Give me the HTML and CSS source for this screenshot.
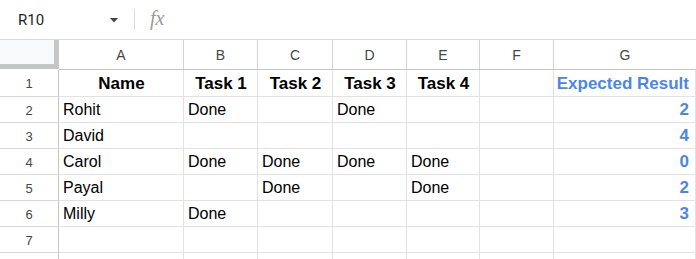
FILE: index.html
```html
<!DOCTYPE html>
<html>
<head>
<meta charset="utf-8">
<link rel="stylesheet" href="styles.css">
</head>
<body>
<div class="app">
  <div class="formula-bar">
    <div class="name-box">
      <span class="name-text">R10</span>
      <svg class="caret" width="8" height="5" viewBox="0 0 8 5"><path d="M0 0 L8 0 L4 4.5 Z" fill="#444"/></svg>
    </div>
    <div class="sep"></div>
    <span class="fx">fx</span>
  </div>
  <div class="sheet">
    <div class="corner"></div>
    <div class="colhead">A</div><div class="colhead">B</div><div class="colhead">C</div><div class="colhead">D</div><div class="colhead">E</div><div class="colhead">F</div><div class="colhead last">G</div>

    <div class="rowhead">1</div>
    <div class="cell b c">Name</div><div class="cell b c">Task 1</div><div class="cell b c">Task 2</div><div class="cell b c">Task 3</div><div class="cell b c">Task 4</div><div class="cell"></div><div class="cell b r blue">Expected Result</div>

    <div class="rowhead">2</div>
    <div class="cell">Rohit</div><div class="cell">Done</div><div class="cell"></div><div class="cell">Done</div><div class="cell"></div><div class="cell"></div><div class="cell b r blue">2</div>

    <div class="rowhead">3</div>
    <div class="cell">David</div><div class="cell"></div><div class="cell"></div><div class="cell"></div><div class="cell"></div><div class="cell"></div><div class="cell b r blue">4</div>

    <div class="rowhead">4</div>
    <div class="cell">Carol</div><div class="cell">Done</div><div class="cell">Done</div><div class="cell">Done</div><div class="cell">Done</div><div class="cell"></div><div class="cell b r blue">0</div>

    <div class="rowhead">5</div>
    <div class="cell">Payal</div><div class="cell"></div><div class="cell">Done</div><div class="cell"></div><div class="cell">Done</div><div class="cell"></div><div class="cell b r blue">2</div>

    <div class="rowhead">6</div>
    <div class="cell">Milly</div><div class="cell">Done</div><div class="cell"></div><div class="cell"></div><div class="cell"></div><div class="cell"></div><div class="cell b r blue">3</div>

    <div class="rowhead">7</div>
    <div class="cell"></div><div class="cell"></div><div class="cell"></div><div class="cell"></div><div class="cell"></div><div class="cell"></div><div class="cell"></div>

    <div class="rowhead"></div>
    <div class="cell"></div><div class="cell"></div><div class="cell"></div><div class="cell"></div><div class="cell"></div><div class="cell"></div><div class="cell"></div>
  </div>
</div>
</body>
</html>
```

FILE: styles.css
```css
html, body {
  margin: 0;
  padding: 0;
  background: #ffffff;
  overflow: hidden;
}
.app {
  width: 696px;
  height: 259px;
  overflow: hidden;
  font-family: "Liberation Sans", Arial, sans-serif;
}
.formula-bar {
  height: 39px;
  border-bottom: 1px solid #dadada;
  display: flex;
  align-items: center;
  background: #ffffff;
}
.name-box {
  width: 134px;
  display: flex;
  align-items: center;
  padding-left: 18px;
  box-sizing: border-box;
}
.name-text {
  font-family: Roboto, "Liberation Sans", sans-serif;
  font-size: 15px;
  color: #1f1f1f;
  flex: 1;
}
.caret {
  margin-right: 16px;
  margin-top: 1px;
}
.sep {
  width: 1px;
  height: 21px;
  background: #dcdcdc;
}
.fx {
  font-family: "Liberation Serif", "Times New Roman", serif;
  font-style: italic;
  font-size: 20px;
  color: #9a9a9a;
  margin-left: 15px;
  margin-top: -2px;
}
.sheet {
  display: grid;
  grid-template-columns: 59px 125px 74px 75px 74px 73px 74px 1fr;
  grid-template-rows: 30px 27px repeat(7, 26px);
}
.corner {
  background: #f8f9fa;
  border-right: 5px solid #c4c7c5;
  border-bottom: 5px solid #c4c7c5;
  box-sizing: border-box;
  margin-bottom: 1px;
}
.colhead {
  display: flex;
  align-items: center;
  justify-content: center;
  font-size: 14px;
  color: #444746;
  border-right: 1px solid #d3d3d3;
  border-bottom: 1px solid #c4c7c5;
  box-sizing: border-box;
  padding-top: 1px;
}
.colhead.last {
  border-right: none;
}
.rowhead {
  display: flex;
  align-items: center;
  justify-content: center;
  font-size: 13px;
  color: #444746;
  border-right: 1px solid #c4c7c5;
  border-bottom: 1px solid #d8d8d8;
  box-sizing: border-box;
  padding-top: 1px;
}
.cell {
  display: flex;
  align-items: center;
  font-size: 16px;
  color: #000000;
  border-right: 1px solid #e2e2e2;
  border-bottom: 1px solid #e2e2e2;
  box-sizing: border-box;
  padding: 1px 3px 0 4px;
  white-space: nowrap;
  overflow: hidden;
}
.cell.b { font-weight: bold; font-size: 17px; }
.cell.c { justify-content: center; }
.cell.r { justify-content: flex-end; padding-right: 6px; }
.cell.blue { color: #4a86e8; }
```
